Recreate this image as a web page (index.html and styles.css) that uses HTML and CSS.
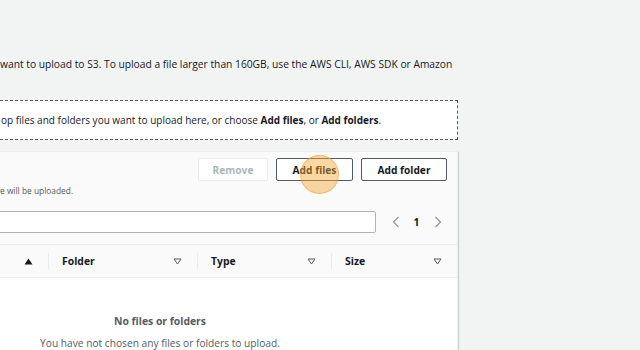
FILE: index.html
```html
<!DOCTYPE html>
<html lang="en">
<head>
    <meta charset="UTF-8">
    <title>Upload</title>
    <link rel="stylesheet" href="styles.css">
</head>
<body>
    <main class="page">
        <!-- Описание -->
        <p class="intro">want to upload to S3. To upload a file larger than 160GB, use the AWS CLI, AWS SDK or Amazon</p>

        <!-- Зона перетаскивания -->
        <div class="dropzone">
            <span>op files and folders you want to upload here, or choose <b>Add files</b>, or <b>Add folders</b>.</span>
        </div>

        <!-- Таблица файлов -->
        <section class="panel">
            <div class="panel-head">
                <div class="actions">
                    <button class="btn btn-remove" disabled>Remove</button>
                    <button class="btn btn-files">Add files</button>
                    <button class="btn btn-folder">Add folder</button>
                    <span class="click-mark"></span>
                </div>
                <p class="hint">e will be uploaded.</p>
                <div class="filter-row">
                    <input class="search" type="text">
                    <nav class="pager">
                        <span class="pager-item">
                            <svg width="8" height="12" viewBox="0 0 8 12"><polyline points="6.5,1 1.5,6 6.5,11" fill="none" stroke="#879596" stroke-width="1.2"/></svg>
                        </span>
                        <span class="pager-item current">1</span>
                        <span class="pager-item">
                            <svg width="8" height="12" viewBox="0 0 8 12"><polyline points="1.5,1 6.5,6 1.5,11" fill="none" stroke="#879596" stroke-width="1.2"/></svg>
                        </span>
                    </nav>
                </div>
            </div>

            <div class="table-head">
                <div class="th th-sort">
                    <svg width="9" height="7" viewBox="0 0 9 7"><polygon points="4.5,0.5 8.5,6.5 0.5,6.5" fill="#16191f"/></svg>
                </div>
                <div class="th"><span>Folder</span>
                    <svg width="9" height="7" viewBox="0 0 9 7"><polygon points="1,1 8,1 4.5,6" fill="none" stroke="#545b64" stroke-width="1"/></svg>
                </div>
                <div class="th"><span>Type</span>
                    <svg width="9" height="7" viewBox="0 0 9 7"><polygon points="1,1 8,1 4.5,6" fill="none" stroke="#545b64" stroke-width="1"/></svg>
                </div>
                <div class="th"><span>Size</span>
                    <svg width="9" height="7" viewBox="0 0 9 7"><polygon points="1,1 8,1 4.5,6" fill="none" stroke="#545b64" stroke-width="1"/></svg>
                </div>
            </div>

            <div class="empty">
                <p class="empty-title">No files or folders</p>
                <p class="empty-text">You have not chosen any files or folders to upload.</p>
            </div>
        </section>
    </main>
</body>
</html>
```

FILE: styles.css
```css
/* Общие стили */
* {
    margin: 0;
    padding: 0;
    box-sizing: border-box;
}

body {
    font-family: 'Open Sans', sans-serif;
    background-color: #f2f3f3;
    color: #16191f;
    overflow: hidden;
    height: 350px;
}

.page {
    width: 468px;
    margin-left: -10px;
    padding-top: 56px;
}

/* Описание */
.intro {
    font-size: 10.25px;
    line-height: 16px;
    padding-left: 10px;
    white-space: nowrap;
}

/* Зона перетаскивания */
.dropzone {
    margin-top: 28px;
    height: 40px;
    border: 1px dashed #545b64;
    background-color: #ffffff;
    font-size: 10px;
    padding-left: 10px;
    display: flex;
    align-items: center;
    white-space: nowrap;
}

.dropzone b {
    font-weight: 700;
}

/* Панель */
.panel {
    margin-top: 12px;
    height: 200px;
    background-color: #ffffff;
    border-right: 1px solid #eaeded;
    box-shadow: 1px 0 1px rgba(0, 28, 36, 0.15);
}

.panel-head {
    background-color: #fafafa;
    padding: 6px 10px 11px 10px;
    border-bottom: 1px solid #eaeded;
}

.actions {
    position: relative;
    display: flex;
    justify-content: flex-end;
    gap: 8px;
}

.btn {
    font-family: 'Open Sans', sans-serif;
    font-size: 10.2px;
    font-weight: 700;
    height: 23px;
    background-color: #ffffff;
    border: 1px solid #545b64;
    border-radius: 2px;
    color: #16191f;
}

.btn-remove {
    width: 70px;
    border-color: #eaeded;
    color: #aab7b8;
}

.btn-files {
    width: 77px;
}

.btn-folder {
    width: 86px;
}

/* Отметка клика */
.click-mark {
    position: absolute;
    right: 108px;
    top: -3px;
    width: 39px;
    height: 39px;
    border-radius: 50%;
    background-color: rgba(247, 168, 52, 0.45);
    border: 1px solid rgba(236, 150, 40, 0.45);
}

.hint {
    font-size: 8.4px;
    line-height: 12px;
    margin-top: 4px;
    color: #545b64;
    white-space: nowrap;
}

.filter-row {
    display: flex;
    align-items: center;
    gap: 9px;
    margin-top: 14px;
}

.search {
    flex: 1;
    height: 22px;
    margin-left: -2px;
    border: 1px solid #aab7b8;
    border-radius: 2px;
    background-color: #ffffff;
}

.pager {
    display: flex;
    margin-right: -1px;
}

.pager-item {
    width: 21px;
    height: 22px;
    display: flex;
    align-items: center;
    justify-content: center;
    font-size: 10.4px;
}

.pager-item.current {
    font-weight: 700;
}

/* Заголовок таблицы */
.table-head {
    display: grid;
    grid-template-columns: 58px 149px 134px 1fr;
    height: 33px;
    background-color: #fafafa;
    border-bottom: 1px solid #eaeded;
}

.th {
    position: relative;
    display: flex;
    align-items: center;
    justify-content: space-between;
    padding: 0 15px 0 14px;
    font-size: 10.4px;
    font-weight: 700;
}

.th + .th::before {
    content: "";
    position: absolute;
    left: 0;
    top: 8px;
    height: 16px;
    border-left: 1px solid #eaeded;
}

.th-sort {
    justify-content: flex-end;
    padding-right: 15px;
}

/* Пустое состояние */
.empty {
    width: 340px;
    text-align: center;
    padding-top: 35px;
}

.empty-title {
    font-size: 10.4px;
    font-weight: 700;
    line-height: 16px;
    color: #545b64;
}

.empty-text {
    font-size: 10.2px;
    line-height: 16px;
    margin-top: 6px;
    color: #545b64;
}
```
